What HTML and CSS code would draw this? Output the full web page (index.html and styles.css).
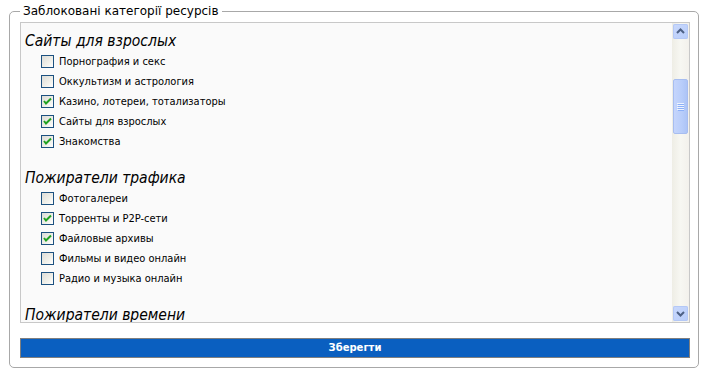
FILE: index.html
```html
<!DOCTYPE html>
<html lang="uk">
<head>
<meta charset="utf-8">
<title>Заблоковані категорії ресурсів</title>
<link rel="stylesheet" href="styles.css">
</head>
<body>
<form class="panel">
  <fieldset class="frame">
    <legend class="frame-title">Заблоковані категорії ресурсів</legend>
    <div class="list-box">
      <div class="list-view">
        <div class="group">
          <div class="group-title">Сайты для взрослых</div>
          <label class="item"><span class="cb"></span><span>Порнография и секс</span></label>
          <label class="item"><span class="cb"></span><span>Оккультизм и астрология</span></label>
          <label class="item"><span class="cb on"><svg viewBox="0 0 11 11" width="11" height="11"><path d="M2 5 L4 7.5 L9 2.5" fill="none" stroke="#21a121" stroke-width="2"/></svg></span><span>Казино, лотереи, тотализаторы</span></label>
          <label class="item"><span class="cb on"><svg viewBox="0 0 11 11" width="11" height="11"><path d="M2 5 L4 7.5 L9 2.5" fill="none" stroke="#21a121" stroke-width="2"/></svg></span><span>Сайты для взрослых</span></label>
          <label class="item"><span class="cb on"><svg viewBox="0 0 11 11" width="11" height="11"><path d="M2 5 L4 7.5 L9 2.5" fill="none" stroke="#21a121" stroke-width="2"/></svg></span><span>Знакомства</span></label>
        </div>
        <div class="group">
          <div class="group-title">Пожиратели трафика</div>
          <label class="item"><span class="cb"></span><span>Фотогалереи</span></label>
          <label class="item"><span class="cb on"><svg viewBox="0 0 11 11" width="11" height="11"><path d="M2 5 L4 7.5 L9 2.5" fill="none" stroke="#21a121" stroke-width="2"/></svg></span><span>Торренты и P2P-сети</span></label>
          <label class="item"><span class="cb on"><svg viewBox="0 0 11 11" width="11" height="11"><path d="M2 5 L4 7.5 L9 2.5" fill="none" stroke="#21a121" stroke-width="2"/></svg></span><span>Файловые архивы</span></label>
          <label class="item"><span class="cb"></span><span>Фильмы и видео онлайн</span></label>
          <label class="item"><span class="cb"></span><span>Радио и музыка онлайн</span></label>
        </div>
        <div class="group">
          <div class="group-title">Пожиратели времени</div>
        </div>
      </div>
      <div class="scrollbar">
        <div class="sb-btn"><svg viewBox="0 0 15 15" width="15" height="15"><path d="M4 9 L7.5 5.5 L11 9" fill="none" stroke="#4d6185" stroke-width="2"/></svg></div>
        <div class="sb-track">
          <div class="sb-gap"></div>
          <div class="sb-thumb">
            <svg viewBox="0 0 7 8" width="7" height="8"><path d="M0 0.5 H7 M0 2.5 H7 M0 4.5 H7 M0 6.5 H7" stroke="#eef3fe" stroke-width="1"/><path d="M1 1.5 H8 M1 3.5 H8 M1 5.5 H8 M1 7.5 H8" stroke="#8cb0f8" stroke-width="1"/></svg>
          </div>
        </div>
        <div class="sb-btn"><svg viewBox="0 0 15 15" width="15" height="15"><path d="M4 6 L7.5 9.5 L11 6" fill="none" stroke="#4d6185" stroke-width="2"/></svg></div>
      </div>
    </div>
    <button type="button" class="save">Зберегти</button>
  </fieldset>
</form>
</body>
</html>
```
FILE: styles.css
```css
html, body {
  margin: 0;
  padding: 0;
  background: #ffffff;
}
body {
  font-family: "DejaVu Sans", Verdana, sans-serif;
  font-size: 11px;
  color: #000;
}
.panel {
  padding: 3px 12px 0 9px;
}
.frame {
  margin: 0;
  border: 1px solid #a8a8a8;
  border-radius: 5px;
  padding: 3px 8px 9px 10px;
  min-width: 0;
}
.frame-title {
  padding: 0 3px;
  margin-left: 0;
  font-size: 12px;
  line-height: 16px;
}
.list-box {
  display: flex;
  height: 299px;
  border: 1px solid #c8c8c8;
  background: #fafafa;
}
.list-view {
  flex: 1;
  overflow: hidden;
  padding-top: 8px;
}
.group {
  margin-bottom: 17px;
}
.group-title {
  font-family: "DejaVu Sans Condensed", "DejaVu Sans", sans-serif;
  font-style: italic;
  font-size: 15.5px;
  line-height: 20px;
  padding-left: 4px;
}
.item {
  display: flex;
  align-items: center;
  gap: 5px;
  height: 20px;
  padding-left: 20px;
  font-family: "DejaVu Sans Condensed", "DejaVu Sans", sans-serif;
  font-size: 11px;
}
.cb {
  width: 11px;
  height: 11px;
  border: 1px solid #1c5180;
  background: linear-gradient(135deg, #dcdcd7 0%, #f0f0ea 60%, #ffffff 100%);
  display: flex;
  align-items: center;
  justify-content: center;
}
.cb svg { display: block; }
.scrollbar {
  width: 17px;
  display: flex;
  flex-direction: column;
  background: linear-gradient(90deg, #eeede5, #f7f7f2 50%, #f3f1ec);
}
.sb-btn {
  width: 15px;
  height: 15px;
  margin: 0 1px 1px 1px;
  border: 0;
  border-radius: 2px;
  background: linear-gradient(135deg, #c9d8fc, #b8cdfa);
  box-shadow: inset 0 0 0 1px #b4c8f6;
  display: flex;
}
.sb-btn:last-child {
  margin: 1px 1px 1px 1px;
}
.sb-btn:first-child {
  margin-top: 1px;
}
.sb-track {
  flex: 1;
  display: flex;
  flex-direction: column;
}
.sb-gap {
  height: 39px;
}
.sb-thumb {
  height: 55px;
  margin: 0 1px;
  border: 1px solid #a7bdf0;
  border-radius: 2px;
  background: linear-gradient(90deg, #c5d5fc, #b8cdfa 60%, #adc4f6);
  display: flex;
  align-items: center;
  justify-content: center;
  box-sizing: border-box;
}
.sb-thumb svg { display: block; }
.save {
  display: block;
  width: 100%;
  margin-top: 15px;
  height: 20px;
  border: 1px solid #7f7f7f;
  background: #0a5fc0;
  color: #fff;
  font-family: "DejaVu Sans", Verdana, sans-serif;
  font-weight: bold;
  font-size: 10px;
  padding: 0;
  line-height: 18px;
}
```
